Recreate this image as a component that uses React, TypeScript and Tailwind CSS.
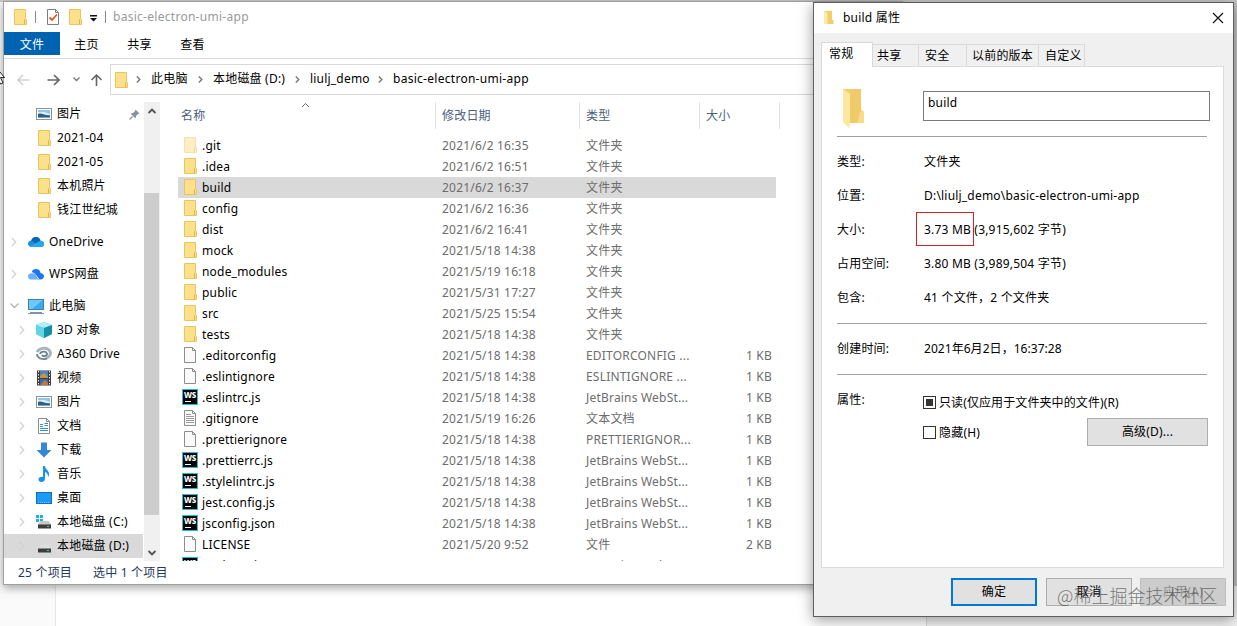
import clsx from "clsx";
import type { ReactNode } from "react";

type FileKind = "folder" | "hidden" | "blank" | "text" | "ws";

interface IFile {
  name: string;
  date: string;
  type: string;
  size?: string;
  kind: FileKind;
}

const FILES: IFile[] = [
  { name: ".git", date: "2021/6/2 16:35", type: "文件夹", kind: "hidden" },
  { name: ".idea", date: "2021/6/2 16:51", type: "文件夹", kind: "folder" },
  { name: "build", date: "2021/6/2 16:37", type: "文件夹", kind: "folder" },
  { name: "config", date: "2021/6/2 16:36", type: "文件夹", kind: "folder" },
  { name: "dist", date: "2021/6/2 16:41", type: "文件夹", kind: "folder" },
  { name: "mock", date: "2021/5/18 14:38", type: "文件夹", kind: "folder" },
  { name: "node_modules", date: "2021/5/19 16:18", type: "文件夹", kind: "folder" },
  { name: "public", date: "2021/5/31 17:27", type: "文件夹", kind: "folder" },
  { name: "src", date: "2021/5/25 15:54", type: "文件夹", kind: "folder" },
  { name: "tests", date: "2021/5/18 14:38", type: "文件夹", kind: "folder" },
  { name: ".editorconfig", date: "2021/5/18 14:38", type: "EDITORCONFIG ...", size: "1 KB", kind: "blank" },
  { name: ".eslintignore", date: "2021/5/18 14:38", type: "ESLINTIGNORE ...", size: "1 KB", kind: "blank" },
  { name: ".eslintrc.js", date: "2021/5/18 14:38", type: "JetBrains WebSt...", size: "1 KB", kind: "ws" },
  { name: ".gitignore", date: "2021/5/19 16:26", type: "文本文档", size: "1 KB", kind: "text" },
  { name: ".prettierignore", date: "2021/5/18 14:38", type: "PRETTIERIGNOR...", size: "1 KB", kind: "blank" },
  { name: ".prettierrc.js", date: "2021/5/18 14:38", type: "JetBrains WebSt...", size: "1 KB", kind: "ws" },
  { name: ".stylelintrc.js", date: "2021/5/18 14:38", type: "JetBrains WebSt...", size: "1 KB", kind: "ws" },
  { name: "jest.config.js", date: "2021/5/18 14:38", type: "JetBrains WebSt...", size: "1 KB", kind: "ws" },
  { name: "jsconfig.json", date: "2021/5/18 14:38", type: "JetBrains WebSt...", size: "1 KB", kind: "ws" },
  { name: "LICENSE", date: "2021/5/20 9:52", type: "文件", size: "2 KB", kind: "blank" },
  { name: "package.json", date: "", type: "JetBrains WebSt...", kind: "ws" },
];

const PC_ITEMS: { name: string; icon: ReactNode }[] = [
  { name: "3D 对象", icon: <CubeIcon /> },
  { name: "A360 Drive", icon: <A360Icon /> },
  { name: "视频", icon: <VideoIcon /> },
  { name: "图片", icon: <PictureIcon /> },
  { name: "文档", icon: <DocumentIcon /> },
  { name: "下载", icon: <DownloadIcon /> },
  { name: "音乐", icon: <MusicIcon /> },
  { name: "桌面", icon: <DesktopIcon /> },
  { name: "本地磁盘 (C:)", icon: <DiskIcon system /> },
  { name: "本地磁盘 (D:)", icon: <DiskIcon /> },
];

const TABS = [
  { name: "共享", width: "w-[46px] pl-[4px]" },
  { name: "安全", width: "w-[48px] pl-[6px]" },
  { name: "以前的版本", width: "w-[72px] pl-[5px]" },
  { name: "自定义", width: "w-[46px] pl-[6px]" },
];

export default function App() {
  return (
    <div className="relative w-[1237px] h-[626px] overflow-hidden bg-white text-xs leading-4 tracking-[0.2px] text-black font-['Noto_Sans','Noto_Sans_CJK_SC',sans-serif]">
      <Backdrop />
      <Explorer />
      <Properties />
      <div className="absolute left-[1057px] top-[584px] text-[18px] leading-[22px] tracking-normal whitespace-nowrap text-[#444]/70 font-['Noto_Sans_CJK_SC',sans-serif] font-light">
        @稀土掘金技术社区
      </div>
      {/* mouse pointer cut off by the left edge */}
      <svg className="absolute left-0 top-[70px]" width="6" height="16" viewBox="0 0 6 16">
        <path d="M-5 -4L4.500 7.500H0.500L3 13L0.500 14L-2 9" fill="#fff" stroke="#222" />
      </svg>
    </div>
  );
}

function Backdrop() {
  return (
    <div className="absolute inset-0 flex flex-col">
      <div className="h-[2px] bg-[#c9c9c9] shrink-0" />
      <div className="flex flex-1">
        <div className="w-[55px] bg-[#fafafa]" />
        <div className="w-[871px] border-l border-[#e6e6e6] bg-white" />
        <div className="flex flex-1 justify-end border-l border-[#ddd] bg-[#f4f4f4]">
          <div className="w-[3px] h-[584px] bg-[#c4c4c4]" />
        </div>
      </div>
    </div>
  );
}

function Explorer() {
  return (
    <div className="absolute left-[3px] top-px w-[900px] h-[584px] flex flex-col border border-[#a0a0a0] bg-white shadow-[0_3px_9px_rgba(0,0,0,0.35)]">
      <div className="flex items-center h-[30px] shrink-0">
        <FolderIcon className="ml-[10px]" />
        <span className="ml-[8px] w-px h-[12px] bg-[#888]" />
        <svg className="ml-[11px]" width="12" height="16" viewBox="0 0 12 16">
          <path d="M0.500 0.500H8.500L11.500 3.500V15.500H0.500Z" fill="#fff" stroke="#7c7c86" />
          <path d="M8.500 0.500V3.500H11.500" fill="none" stroke="#7c7c86" />
          <path d="M2.500 8.500L5 11L10 5.500" fill="none" stroke="#e5531d" strokeWidth="1.800" />
        </svg>
        <FolderIcon className="ml-[10px]" />
        <svg className="ml-[8px] mt-[3px]" width="7" height="7" viewBox="0 0 7 7">
          <path d="M0 0H7V1.500H0ZM0 3H7L3.500 6.500Z" fill="#111" />
        </svg>
        <span className="ml-[8px] w-px h-[12px] bg-[#888]" />
        <span className="ml-[7px] text-[#999] tracking-[0.28px]">basic-electron-umi-app</span>
      </div>

      <div className="flex h-[27px] shrink-0 border-b border-[#d9dadb] leading-[25px]">
        <div className="w-[56px] h-[23px] bg-[#0063b1] text-white text-center">文件</div>
        <div className="w-[53px] text-center">主页</div>
        <div className="w-[53px] text-center">共享</div>
        <div className="w-[53px] text-center">查看</div>
      </div>

      <div className="flex h-[43px] shrink-0 pt-[5px]">
        <div className="flex items-center w-[106px] h-[31px] pl-[13px]">
          <ArrowIcon color="#d2d2d2" d="M12.500 6H1M6 1L1 6L6 11" />
          <ArrowIcon className="ml-[17px]" color="#666" d="M0.500 6H12M7 1L12 6L7 11" />
          <svg className="ml-[13px]" width="7" height="5" viewBox="0 0 7 5">
            <path d="M0.500 0.500L3.500 3.500L6.500 0.500" fill="none" stroke="#777" strokeWidth="1.400" />
          </svg>
          <ArrowIcon className="ml-[10px]" color="#666" d="M6.500 12V1M1.500 6L6.500 1L11.500 6" />
        </div>
        <div className="flex items-center flex-1 h-[31px] border border-[#d9d9d9] pl-[4px] leading-[14px] whitespace-nowrap">
          <FolderIcon />
          <Crumb />
          <span className="w-[39px] pb-[2px]">此电脑</span>
          <Crumb />
          <span className="w-[74px] pb-[2px]">本地磁盘 (D:)</span>
          <Crumb />
          <span className="w-[60px] pb-[2px]">liulj_demo</span>
          <Crumb />
          <span className="pb-[2px] tracking-[0.28px]">basic-electron-umi-app</span>
        </div>
      </div>

      <div className="flex h-[459px] shrink-0">
        <Sidebar />
        <div className="flex flex-col w-[16px] bg-[#f0f0f0]">
          <div className="flex items-center justify-center h-[91px] pb-[73px]">
            <svg width="8" height="6" viewBox="0 0 8 6">
              <path d="M0.500 5L4 1.500L7.500 5" fill="none" stroke="#505050" strokeWidth="1.800" />
            </svg>
          </div>
          <div className="w-[15px] h-[322px] bg-[#cdcdcd]" />
          <div className="flex flex-1 items-end justify-center pb-[5px]">
            <svg width="8" height="6" viewBox="0 0 8 6">
              <path d="M0.500 1L4 4.500L7.500 1" fill="none" stroke="#505050" strokeWidth="1.800" />
            </svg>
          </div>
        </div>
        <FileList />
      </div>

      <div className="flex flex-1 items-center pl-[14px] text-[#1e395b]">
        <span className="w-[75px]">25 个项目</span>
        <span>选中 1 个项目</span>
      </div>
    </div>
  );
}

function Sidebar() {
  return (
    <div className="w-[140px] overflow-hidden whitespace-nowrap">
      <div className="flex items-center h-6 pl-[32px]">
        <PictureIcon />
        <span className="ml-[5px] w-[24px]">图片</span>
        <svg className="ml-[48px]" width="11" height="11" viewBox="0 0 11 11">
          <path d="M6.500 0.500L10.500 4.500L9 5L7 7L6.500 9.500L1.500 4.500L4 4L6 2Z" fill="#8a9199" />
          <path d="M3.500 7.500L0.500 10.500" stroke="#8a9199" strokeWidth="1.300" />
        </svg>
      </div>
      {["2021-04", "2021-05", "本机照片", "钱江世纪城"].map((name) => (
        <div key={name} className="flex items-center h-6 pl-[34px]">
          <FolderIcon />
          <span className="ml-[6px]">{name}</span>
        </div>
      ))}
      <div className="flex items-center h-6 mt-2 pl-[7px]">
        <Chevron />
        <span className="ml-[11px]"><CloudIcon /></span>
        <span className="ml-[5px]">OneDrive</span>
      </div>
      <div className="flex items-center h-6 mt-2 pl-[7px]">
        <Chevron />
        <span className="ml-[11px]"><WpsIcon /></span>
        <span className="ml-[5px]">WPS网盘</span>
      </div>
      <div className="flex items-center h-6 mt-2 pl-[6px]">
        <svg width="9" height="6" viewBox="0 0 9 6">
          <path d="M0.500 0.500L4.500 4.500L8.500 0.500" fill="none" stroke="#b5b5b5" strokeWidth="1.300" />
        </svg>
        <span className="ml-[9px]"><ComputerIcon /></span>
        <span className="ml-[5px]">此电脑</span>
      </div>
      {PC_ITEMS.map((item, index) => (
        <div
          key={item.name}
          className={clsx(
            "flex items-center h-6 pl-[15px]",
            index === PC_ITEMS.length - 1 && "w-[139px] bg-[#d9d9d9]"
          )}
        >
          <Chevron />
          <span className="ml-[11px]">{item.icon}</span>
          <span className="ml-[5px]">{item.name}</span>
        </div>
      ))}
    </div>
  );
}

function FileList() {
  return (
    <div className="flex-1 overflow-hidden pl-[18px] whitespace-nowrap">
      <div className="relative flex h-[27px] text-[#4c607a] leading-[28px]">
        <svg className="absolute left-[123px] top-0" width="9" height="6" viewBox="0 0 9 6">
          <path d="M1 5L4.500 1.500L8 5" fill="none" stroke="#666" />
        </svg>
        <div className="w-[258px] pl-[3px] border-r border-[#e2e2e2]">名称</div>
        <div className="w-[144px] pl-[6px] border-r border-[#e2e2e2]">修改日期</div>
        <div className="w-[120px] pl-[6px] border-r border-[#e2e2e2]">类型</div>
        <div className="w-[80px] pl-[6px] border-r border-[#e2e2e2]">大小</div>
      </div>
      <div className="pt-[6px]">
        {FILES.map((file) => (
          <div
            key={file.name}
            className={clsx(
              "flex w-[598px] h-[21px] leading-[21px] text-[#6d6d6d]",
              file.name === "build" && "bg-[#d9d9d9]"
            )}
          >
            <div className="flex w-[264px] pl-[4px]">
              <div className="w-[20px] pt-[2px]"><FileIcon kind={file.kind} /></div>
              <span className="text-black">{file.name}</span>
            </div>
            <div className="w-[144px]">{file.date}</div>
            <div className="w-[110px]">{file.type}</div>
            <div className="w-[76px] text-right">{file.size}</div>
          </div>
        ))}
      </div>
    </div>
  );
}

function Properties() {
  return (
    <div className="absolute left-[813px] top-[2px] w-[421px] h-[615px] flex flex-col border border-[#5e5e5e] bg-[#f0f0f0] shadow-[0_3px_14px_rgba(0,0,0,0.4)]">
      <div className="flex items-center h-[30px] shrink-0 pl-[10px] pr-[9px] bg-white">
        <svg width="10" height="14" viewBox="0 0 10 14">
          <path d="M0.500 0H8V9H9.500V13H0.500Z" fill="#f3cd66" />
          <path d="M0.500 0L3.500 2V14L0.500 12Z" fill="#fde9a9" />
        </svg>
        <span className="ml-[9px] flex-1">build 属性</span>
        <svg width="12" height="12" viewBox="0 0 12 12">
          <path d="M1 1L11 11M11 1L1 11" stroke="#111" strokeWidth="1.200" />
        </svg>
      </div>

      <div className="flex items-end h-[33px] shrink-0 pl-[7px]">
        <div className="relative z-10 w-[52px] h-[25px] -mb-px pl-[7px] border border-b-0 border-[#d9d9d9] bg-white leading-[22px]">
          常规
        </div>
        {TABS.map((tab) => (
          <div
            key={tab.name}
            className={clsx("h-[22px] border-t border-r border-[#d9d9d9] leading-[22px] whitespace-nowrap", tab.width)}
          >
            {tab.name}
          </div>
        ))}
      </div>

      <div className="mx-[7px] w-[403px] h-[502px] shrink-0 border border-[#dcdcdc] bg-white pl-[15px]">
        <div className="flex h-[70px] w-[370px] border-b border-[#a0a0a0]">
          <svg className="ml-[6px] mt-[21px] shrink-0" width="22" height="40" viewBox="0 0 22 40">
            <path d="M0 1H18V22L21 24V35H5Z" fill="#f5d067" />
            <path d="M7 1H18V22L21 24V35H7Z" fill="#f0cb6a" />
            <path d="M18 22L21 24V35H14Z" fill="#f9dc85" />
            <path d="M0 1L7 6V36L6 40L0 34Z" fill="#fde8a2" />
          </svg>
          <div className="ml-[58px] mt-[24px] w-[287px] h-[30px] shrink-0 pl-[4px] border border-[#7a7a7a] leading-[22px]">
            build
          </div>
        </div>
        <div className="h-[187px] w-[370px] pt-[8px] border-b border-[#a0a0a0]">
          <Row label="类型:">文件夹</Row>
          <Row label="位置:">D:\liulj_demo\basic-electron-umi-app</Row>
          <Row label="大小:">
            <span className="relative">
              3.73 MB (3,915,602 字节)
              <span className="absolute -left-[8px] -top-[9px] w-[58px] h-[34px] border border-[#cf2323]" />
            </span>
          </Row>
          <Row label="占用空间:">3.80 MB (3,989,504 字节)</Row>
          <Row label="包含:">41 个文件，2 个文件夹</Row>
        </div>
        <div className="h-[51px] w-[370px] pt-[8px] border-b border-[#a0a0a0]">
          <Row label="创建时间:">
            <span className="tracking-[0.05px]">2021年6月2日，16:37:28</span>
          </Row>
        </div>
        <div className="flex w-[386px] pt-[17px]">
          <div className="w-[86px]">属性:</div>
          <div className="flex-1 pt-[3px]">
            <div className="flex items-center h-4">
              <span className="flex items-center justify-center w-[13px] h-[13px] -mt-px border border-[#333]">
                <span className="w-[7px] h-[7px] bg-[#333]" />
              </span>
              <span className="ml-[3px] tracking-[0.1px]">只读(仅应用于文件夹中的文件)(R)</span>
            </div>
            <div className="flex">
              <span className="mt-[15px] w-[13px] h-[13px] shrink-0 border border-[#333]" />
              <span className="ml-[3px] mt-[14px] w-[148px]">隐藏(H)</span>
              <span className="mt-[7px] w-[121px] h-[28px] shrink-0 border border-[#adadad] bg-[#e1e1e1] text-center leading-[26px]">
                高级(D)...
              </span>
            </div>
          </div>
        </div>
      </div>

      <div className="flex pt-[10px] pl-[137px] text-center">
        <div className="w-[86px] h-[28px] border-2 border-[#0078d7] bg-[#e1e1e1] leading-[24px]">确定</div>
        <div className="w-[86px] h-[28px] ml-[9px] border border-[#adadad] bg-[#e1e1e1] leading-[26px]">取消</div>
        <div className="w-[86px] h-[28px] ml-[8px] border border-[#bfbfbf] bg-[#ccc] text-[#8c8c8c] leading-[26px]">应用(A)</div>
      </div>
    </div>
  );
}

function Row({ label, children }: { label: string; children: ReactNode }) {
  return (
    <div className="flex items-center h-[34px] whitespace-nowrap">
      <div className="w-[87px]">{label}</div>
      <div>{children}</div>
    </div>
  );
}

function Crumb() {
  return (
    <svg className="ml-[8px] mr-[10px] shrink-0" width="5" height="7" viewBox="0 0 5 7">
      <path d="M0.800 0.500L3.800 3.500L0.800 6.500" fill="none" stroke="#777" strokeWidth="1.400" />
    </svg>
  );
}

function Chevron() {
  return (
    <svg width="6" height="10" viewBox="0 0 6 10">
      <path d="M0.800 1L4.800 5L0.800 9" fill="none" stroke="#d0d0d0" strokeWidth="1.200" />
    </svg>
  );
}

function ArrowIcon({ d, color, className }: { d: string; color: string; className?: string }) {
  return (
    <svg className={className} width="13" height="12" viewBox="0 0 13 12">
      <path d={d} fill="none" stroke={color} strokeWidth="1.600" />
    </svg>
  );
}

function FolderIcon({ className, faded }: { className?: string; faded?: boolean }) {
  return (
    <svg className={clsx("shrink-0", className, faded && "opacity-50")} width="13" height="16" viewBox="0 0 13 16">
      <path d="M0.500 0.500H11.500V9.500L12.500 10.500V15.500H0.500Z" fill="#fde08a" stroke="#e9c562" />
      <path d="M10.500 15V10.500L11.500 9.500" fill="none" stroke="#dfb445" />
    </svg>
  );
}

function FileIcon({ kind }: { kind: FileKind }) {
  if (kind === "folder" || kind === "hidden") {
    return <FolderIcon className="ml-[2px]" faded={kind === "hidden"} />;
  }
  if (kind === "ws") {
    return (
      <div className="w-4 h-4 border border-[#21bfd8] bg-black text-white">
        <div className="h-[9px] text-[8px] leading-[10px] tracking-[-0.3px] font-extrabold text-center">WS</div>
        <div className="ml-[2px] mt-[2px] w-[6px] h-px bg-white" />
      </div>
    );
  }
  return (
    <svg className="ml-[2px]" width="12" height="16" viewBox="0 0 12 16">
      <path d="M0.500 0.500H8.500L11.500 3.500V15.500H0.500Z" fill="#fafafa" stroke="#8d8d8d" />
      <path d="M8.500 0.500V3.500H11.500" fill="none" stroke="#8d8d8d" />
      {kind === "text" && (
        <path d="M2 4.500H7M2 6.500H10M2 8.500H10M2 10.500H10M2 12.500H10" stroke="#9a9a9a" />
      )}
    </svg>
  );
}

function PictureIcon() {
  return (
    <svg width="16" height="16" viewBox="0 0 16 16">
      <rect x="0.500" y="2.500" width="15" height="11" fill="#fff" stroke="#8d9499" />
      <rect x="2" y="4" width="12" height="8" fill="#8fc8ee" />
      <path d="M2 6H8L14 8V9H2Z" fill="#dcf0fb" />
      <path d="M2 8C5 6.500 7 9 14 9.500V12H2Z" fill="#33607a" />
      <path d="M2 11H14V12H2Z" fill="#74a6c6" />
    </svg>
  );
}

function CloudIcon() {
  return (
    <svg width="16" height="16" viewBox="0 0 16 16">
      <path d="M4 13C1.500 13 0 11.500 0 9.700C0 8 1.300 6.500 3.200 6.500C4 4 6 3 8 3C10.300 3 12 4.500 12.500 6.700C14.600 6.800 16 8 16 10C16 12 14.500 13 13 13Z" fill="#1490df" />
      <path d="M3.200 6.500C4 4 6 3 8 3C10.300 3 12 4.500 12.500 6.700L8 9.500Z" fill="#0a64b8" />
      <path d="M2 12.300L12 7C14.600 6.800 16 8 16 10C16 12 14.500 13 13 13H4Z" fill="#28a8ea" />
    </svg>
  );
}

function WpsIcon() {
  return (
    <svg width="16" height="16" viewBox="0 0 16 16">
      <path d="M4 5.500C5 3.500 7 2.800 8.700 3.100C11 3.500 12.200 5 12.500 7C15 7.300 16 8.800 16 10.300C16 12.200 14.500 13.500 12.500 13.500H10L4 7Z" fill="#1977f3" />
      <path d="M3.500 13.500C1.500 13.500 0 12.300 0 10.400C0 8.500 1.500 7.300 3.200 7.300C5 7.300 6 8.500 10 13.500Z" fill="#69b1fb" />
      <path d="M3.800 6.900C6.500 6.500 8 9.500 11 13.500" fill="none" stroke="#fff" />
    </svg>
  );
}

function ComputerIcon() {
  return (
    <svg width="16" height="16" viewBox="0 0 16 16">
      <rect x="0.500" y="1.500" width="15" height="10" fill="#3aa9f0" stroke="#3e7ea8" />
      <path d="M1 2H15L4 11H1Z" fill="#6fc6f8" />
      <path d="M2 14.500H14M0 15.500H16" stroke="#7f95a5" />
    </svg>
  );
}

function CubeIcon() {
  return (
    <svg width="16" height="16" viewBox="0 0 16 16">
      <path d="M8 0L16 3V12L8 16L0 12V3Z" fill="#35c3d9" />
      <path d="M8 0L16 3L8 6L0 3Z" fill="#b5eff6" />
      <path d="M8 6L16 3V12L8 16Z" fill="#168fa5" />
      <path d="M0 3L8 6V16L0 12Z" fill="#5fd5e6" />
    </svg>
  );
}

function A360Icon() {
  return (
    <svg width="16" height="16" viewBox="0 0 16 16">
      <path d="M1 6C3 2 10 1 13 4C16 7 14 11 10 12" fill="none" stroke="#a9b5bd" strokeWidth="3" />
      <path d="M4 8C5 5 10 5 11 7.500C11.500 10 7 11 6 9" fill="none" stroke="#66808f" strokeWidth="1.800" />
      <path d="M1 8C1 12 6 14 11 12.500" fill="none" stroke="#788d99" strokeWidth="2" />
    </svg>
  );
}

function VideoIcon() {
  return (
    <svg width="16" height="16" viewBox="0 0 16 16">
      <rect x="1" y="0.500" width="14" height="15" fill="#3b3b3b" />
      <path d="M2.500 1V15M13.500 1V15" stroke="#eee" strokeDasharray="1.500 1.500" />
      <rect x="4" y="1" width="8" height="7" fill="#4c82c4" />
      <rect x="4" y="9" width="8" height="6" fill="#356cae" />
      <path d="M4 6L8 3L12 7V8H4Z" fill="#c39a36" />
      <path d="M5 14L9 10L12 13V15H5Z" fill="#c9763a" />
    </svg>
  );
}

function DocumentIcon() {
  return (
    <svg width="16" height="16" viewBox="0 0 16 16">
      <path d="M2.500 0.500H10.500L13.500 3.500V15.500H2.500Z" fill="#fff" stroke="#8d8d8d" />
      <path d="M10.500 0.500V3.500H13.500" fill="none" stroke="#8d8d8d" />
      <path d="M4 6.500H7M4 8.500H7M8.500 5.500H12M8.500 7.500H12M4 10.500H12M4 12.500H12" stroke="#2f95b5" />
    </svg>
  );
}

function DownloadIcon() {
  return (
    <svg width="16" height="16" viewBox="0 0 16 16">
      <path d="M5 0.500H11V8H15.500L8 15.500L0.500 8H5Z" fill="#3289d8" />
    </svg>
  );
}

function MusicIcon() {
  return (
    <svg width="16" height="16" viewBox="0 0 16 16">
      <path d="M7 0H9C9 3.500 13.500 4 13 9C12.800 10 12.300 10.500 12 11C12 7.500 10.500 6.500 9 6V12.500C9 14.500 7.500 16 5.500 16C3.700 16 2.500 15 2.500 13.500C2.500 11.500 5 10.300 7 11Z" fill="#1692e6" />
    </svg>
  );
}

function DesktopIcon() {
  return (
    <svg width="16" height="16" viewBox="0 0 16 16">
      <rect x="0.500" y="2.500" width="15" height="11" fill="#1a9bf7" stroke="#1270b8" />
      <path d="M2 12.500H13" stroke="#75c4fb" strokeDasharray="1 1" />
    </svg>
  );
}

function DiskIcon({ system }: { system?: boolean }) {
  return (
    <svg width="16" height="16" viewBox="0 0 16 16">
      {system && <path d="M0 1H3V4H0ZM4 1H7V4H4ZM0 5H3V8H0ZM4 5H7V8H4Z" fill="#1ab0e0" />}
      <path d="M4 7H13L15 11H2Z" fill={system ? "#c8c8c8" : "#dedede"} />
      <rect x="2" y="10.500" width="13" height="4" fill="#3d3d3d" />
      <rect x="11" y="12" width="2" height="1" fill="#3de06a" />
    </svg>
  );
}
